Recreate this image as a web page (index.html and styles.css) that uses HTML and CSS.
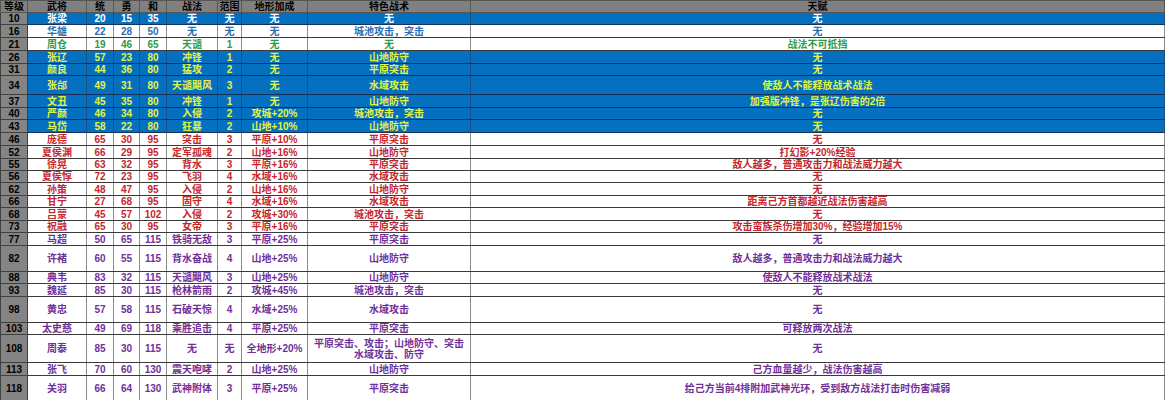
FILE: index.html
```html
<!DOCTYPE html>
<html lang="zh-CN">
<head>
<meta charset="utf-8">
<title>武将表</title>
<link rel="stylesheet" href="styles.css">
</head>
<body>
<table class="sheet">
<colgroup>
<col class="c-lv"><col class="c-name"><col class="c-n"><col class="c-n2"><col class="c-n"><col class="c-skill"><col class="c-range"><col class="c-terrain"><col class="c-tactic"><col class="c-talent">
</colgroup>
<thead>
<tr class="hd h12"><th>等级</th><th>武将</th><th>统</th><th>勇</th><th>和</th><th>战法</th><th>范围</th><th>地形加成</th><th>特色战术</th><th>天赋</th></tr>
</thead>
<tbody>
<tr class="blue white h12"><td class="lv">10</td><td>张梁</td><td>20</td><td>15</td><td>35</td><td>无</td><td>无</td><td>无</td><td>无</td><td>无</td></tr>
<tr class="plain bluetext h13"><td class="lv">16</td><td>华雄</td><td>22</td><td>28</td><td>50</td><td>无</td><td>无</td><td>无</td><td>城池攻击，突击</td><td>无</td></tr>
<tr class="plain green h13"><td class="lv">21</td><td>周仓</td><td>19</td><td>46</td><td>65</td><td>天谴</td><td>1</td><td>无</td><td>无</td><td>战法不可抵挡</td></tr>
<tr class="blue yellow h13"><td class="lv">26</td><td>张辽</td><td>57</td><td>23</td><td>80</td><td>冲锋</td><td>1</td><td>无</td><td>山地防守</td><td>无</td></tr>
<tr class="blue yellow h12"><td class="lv">31</td><td>颜良</td><td>44</td><td>36</td><td>80</td><td>猛攻</td><td>2</td><td>无</td><td>平原突击</td><td>无</td></tr>
<tr class="blue yellow h19"><td class="lv">34</td><td>张郃</td><td>49</td><td>31</td><td>80</td><td>天谴飓风</td><td>3</td><td>无</td><td>水域攻击</td><td>使敌人不能释放战术战法</td></tr>
<tr class="blue yellow h13"><td class="lv">37</td><td>文丑</td><td>45</td><td>35</td><td>80</td><td>冲锋</td><td>1</td><td>无</td><td>山地防守</td><td>加强版冲锋，是张辽伤害的2倍</td></tr>
<tr class="blue yellow h12"><td class="lv">40</td><td>严颜</td><td>46</td><td>34</td><td>80</td><td>入侵</td><td>2</td><td>攻城+20%</td><td>城池攻击，突击</td><td>无</td></tr>
<tr class="blue yellow h13"><td class="lv">43</td><td>马岱</td><td>58</td><td>22</td><td>80</td><td>狂暴</td><td>2</td><td>山地+10%</td><td>山地防守</td><td>无</td></tr>
<tr class="plain red h13"><td class="lv">46</td><td>庞德</td><td>65</td><td>30</td><td>95</td><td>突击</td><td>3</td><td>平原+10%</td><td>平原突击</td><td>无</td></tr>
<tr class="plain red h13"><td class="lv">52</td><td>夏侯渊</td><td>66</td><td>29</td><td>95</td><td>定军孤魂</td><td>2</td><td>山地+16%</td><td>山地防守</td><td>打幻影+20%经验</td></tr>
<tr class="plain red h12"><td class="lv">55</td><td>徐晃</td><td>63</td><td>32</td><td>95</td><td>背水</td><td>3</td><td>平原+16%</td><td>平原突击</td><td>敌人越多，普通攻击力和战法威力越大</td></tr>
<tr class="plain red h12"><td class="lv">56</td><td>夏侯惇</td><td>72</td><td>23</td><td>95</td><td>飞羽</td><td>4</td><td>水域+16%</td><td>水域攻击</td><td>无</td></tr>
<tr class="plain red h13"><td class="lv">62</td><td>孙策</td><td>48</td><td>47</td><td>95</td><td>入侵</td><td>2</td><td>山地+16%</td><td>山地防守</td><td>无</td></tr>
<tr class="plain red h12"><td class="lv">66</td><td>甘宁</td><td>27</td><td>68</td><td>95</td><td>固守</td><td>4</td><td>水域+16%</td><td>水域攻击</td><td>距离己方首都越近战法伤害越高</td></tr>
<tr class="plain red h13"><td class="lv">68</td><td>吕蒙</td><td>45</td><td>57</td><td>102</td><td>入侵</td><td>2</td><td>攻城+30%</td><td>城池攻击，突击</td><td>无</td></tr>
<tr class="plain red h12"><td class="lv">73</td><td>祝融</td><td>65</td><td>30</td><td>95</td><td>女帝</td><td>3</td><td>平原+16%</td><td>平原突击</td><td>攻击蛮族杀伤增加30%，经验增加15%</td></tr>
<tr class="plain purple h13"><td class="lv">77</td><td>马超</td><td>50</td><td>65</td><td>115</td><td>铁骑无敌</td><td>3</td><td>平原+25%</td><td>平原突击</td><td>无</td></tr>
<tr class="plain purple h26"><td class="lv">82</td><td>许褚</td><td>60</td><td>55</td><td>115</td><td>背水奋战</td><td>4</td><td>山地+25%</td><td>山地防守</td><td>敌人越多，普通攻击力和战法威力越大</td></tr>
<tr class="plain purple h12"><td class="lv">88</td><td>典韦</td><td>83</td><td>32</td><td>115</td><td>天谴飓风</td><td>3</td><td>山地+25%</td><td>山地防守</td><td>使敌人不能释放战术战法</td></tr>
<tr class="plain purple h13"><td class="lv">93</td><td>魏延</td><td>85</td><td>30</td><td>115</td><td>枪林箭雨</td><td>2</td><td>攻城+45%</td><td>城池攻击，突击</td><td>无</td></tr>
<tr class="plain purple h26"><td class="lv">98</td><td>黄忠</td><td>57</td><td>58</td><td>115</td><td>石破天惊</td><td>4</td><td>水域+25%</td><td>水域攻击</td><td>无</td></tr>
<tr class="plain purple h12"><td class="lv">103</td><td>太史慈</td><td>49</td><td>69</td><td>118</td><td>乘胜追击</td><td>4</td><td>平原+25%</td><td>平原突击</td><td>可释放两次战法</td></tr>
<tr class="plain purple h28"><td class="lv">108</td><td>周泰</td><td>85</td><td>30</td><td>115</td><td>无</td><td>无</td><td>全地形+20%</td><td>平原突击、攻击；山地防守、突击<br>水域攻击、防守</td><td>无</td></tr>
<tr class="plain purple h13"><td class="lv">113</td><td>张飞</td><td>70</td><td>60</td><td>130</td><td>震天咆哮</td><td>2</td><td>山地+25%</td><td>山地防守</td><td>己方血量越少，战法伤害越高</td></tr>
<tr class="plain purple h26"><td class="lv">118</td><td>关羽</td><td>66</td><td>64</td><td>130</td><td>武神附体</td><td>3</td><td>平原+25%</td><td>平原突击</td><td>给己方当前4排附加武神光环，受到敌方战法打击时伤害减弱</td></tr>
</tbody>
</table>
</body>
</html>
```
FILE: styles.css
```css
html, body {
  margin: 0;
  padding: 0;
  background: #ffffff;
}

.sheet {
  border-collapse: collapse;
  table-layout: fixed;
  width: 1164px;
  font-family: "Liberation Sans", "Noto Sans CJK SC", sans-serif;
  font-weight: bold;
  font-size: 10px;
}

.c-lv { width: 27px; }
.c-name { width: 59px; }
.c-n { width: 27px; }
.c-n2 { width: 26px; }
.c-skill { width: 51px; }
.c-range { width: 24px; }
.c-terrain { width: 66px; }
.c-tactic { width: 163px; }
.c-talent { width: 694px; }

.sheet th,
.sheet td {
  padding: 0;
  text-align: center;
  vertical-align: middle;
  line-height: 11px;
  white-space: nowrap;
  overflow: hidden;
  border: 1px solid #3a3a3a;
  border-left-color: #8c8c8c;
  border-right-color: #8c8c8c;
}

.hd th {
  background: #808080;
  color: #000000;
  font-weight: bold;
  border-color: #555555;
}

.h12 { height: 12px; }
.h13 { height: 13px; }
.h19 { height: 19px; }
.h26 { height: 26px; }
.h28 { height: 28px; }

.sheet td.lv {
  background: #848484;
  color: #000000;
  border-color: #404040;
}

.blue td {
  background: #0570c0;
  border-top-color: #16325a;
  border-bottom-color: #16325a;
  border-left-color: #1b4f86;
  border-right-color: #1b4f86;
}

.plain td {
  background: #ffffff;
}

.white td { color: #ffffff; }
.bluetext td { color: #2a6fb2; }
.green td { color: #2f9a48; }
.yellow td { color: #e3f446; }
.red td { color: #c4262c; }
.purple td { color: #70309a; }

.sheet tr td.lv { color: #000000; }
```
